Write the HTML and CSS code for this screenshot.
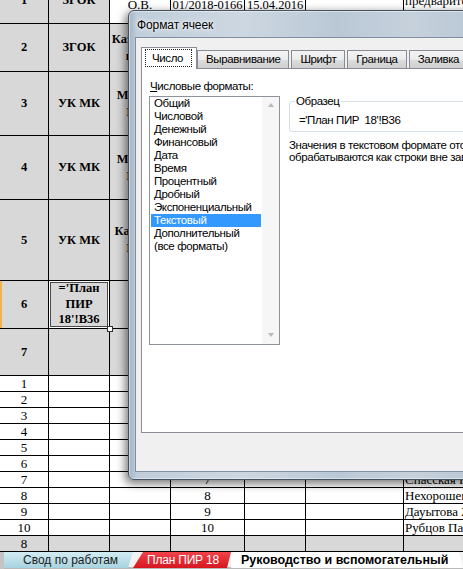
FILE: index.html
```html
<!DOCTYPE html>
<html lang="ru">
<head>
<meta charset="utf-8">
<title>Формат ячеек</title>
<link rel="stylesheet" href="styles.css">
</head>
<body>
<div class="sheet">
  <!-- row 1 -->
  <div class="c g b">1</div>
  <div class="c g b">ЗГОК</div>
  <div class="c w dn9">О.В.</div>
  <div class="c w dn10">01/2018-0166</div>
  <div class="c w dn10">15.04.2016</div>
  <div class="c w up9">01.06.2018</div>
  <div class="c w l">предварительный</div>
  <!-- row 2 -->
  <div class="c g b">2</div>
  <div class="c g b">ЗГОК</div>
  <div class="c g b two">Казахмыс<br>в т.ч.</div>
  <div class="c g"></div><div class="c g"></div><div class="c g"></div><div class="c g"></div>
  <!-- row 3 -->
  <div class="c g b">3</div>
  <div class="c g b">УК МК</div>
  <div class="c g b two">Монтаж<br>ПИР</div>
  <div class="c g"></div><div class="c g"></div><div class="c g"></div><div class="c g"></div>
  <!-- row 4 -->
  <div class="c g b">4</div>
  <div class="c g b">УК МК</div>
  <div class="c g b two">Монтаж<br>ПИР</div>
  <div class="c g"></div><div class="c g"></div><div class="c g"></div><div class="c g"></div>
  <!-- row 5 -->
  <div class="c g b">5</div>
  <div class="c g b">УК МК</div>
  <div class="c g b two">Каражан<br>ПИР</div>
  <div class="c g"></div><div class="c g"></div><div class="c g"></div><div class="c g"></div>
  <!-- row 6 -->
  <div class="c g b rowmark">6</div>
  <div class="c g b three selcell">='План<br>ПИР<br>18'!B36<span class="handle"></span></div>
  <div class="c g"></div><div class="c g"></div><div class="c g"></div><div class="c g"></div><div class="c g"></div>
  <!-- row 7 -->
  <div class="c g b">7</div>
  <div class="c g"></div><div class="c g"></div><div class="c g"></div><div class="c g"></div><div class="c g"></div><div class="c g"></div>
  <!-- rows 1..10 -->
  <div class="c">1</div><div class="c"></div><div class="c"></div><div class="c">1</div><div class="c"></div><div class="c"></div><div class="c l">Иванов А.С.</div>
  <div class="c">2</div><div class="c"></div><div class="c"></div><div class="c">2</div><div class="c"></div><div class="c"></div><div class="c l">Петров И.И.</div>
  <div class="c">3</div><div class="c"></div><div class="c"></div><div class="c">3</div><div class="c"></div><div class="c"></div><div class="c l">Сидоров К.Н.</div>
  <div class="c">4</div><div class="c"></div><div class="c"></div><div class="c">4</div><div class="c"></div><div class="c"></div><div class="c l">Ахметов Б.К.</div>
  <div class="c">5</div><div class="c"></div><div class="c"></div><div class="c">5</div><div class="c"></div><div class="c"></div><div class="c l">Ким О.В.</div>
  <div class="c">6</div><div class="c"></div><div class="c"></div><div class="c">6</div><div class="c"></div><div class="c"></div><div class="c l">Смирнова Е.А.</div>
  <div class="c">7</div><div class="c"></div><div class="c"></div><div class="c">7</div><div class="c"></div><div class="c"></div><div class="c l">Спасская Н.В.</div>
  <div class="c">8</div><div class="c"></div><div class="c"></div><div class="c">8</div><div class="c"></div><div class="c"></div><div class="c l">Нехорошев В.Н.</div>
  <div class="c">9</div><div class="c"></div><div class="c"></div><div class="c">9</div><div class="c"></div><div class="c"></div><div class="c l">Дауытова Ж.К.</div>
  <div class="c">10</div><div class="c"></div><div class="c"></div><div class="c">10</div><div class="c"></div><div class="c"></div><div class="c l">Рубцов Павел</div>
  <!-- row 8 gray -->
  <div class="c g">8</div>
  <div class="c g"></div><div class="c g"></div><div class="c g"></div><div class="c g"></div><div class="c g"></div><div class="c g"></div>
</div>

<div class="sheettabs">
  <div class="st-edge"></div>
  <div class="st st-blue">Свод по работам</div>
  <div class="st st-red">План ПИР 18</div>
  <div class="st st-active">Руководство и вспомогательный</div>
</div>

<div class="dialog">
  <div class="titlebar">Формат ячеек</div>
  <div class="client">
    <div class="tabstrip">
      <div class="tab sel"><span class="focus">Число</span></div>
      <div class="tab first">Выравнивание</div>
      <div class="tab">Шрифт</div>
      <div class="tab">Граница</div>
      <div class="tab">Заливка</div>
      <div class="tab">Защита</div>
    </div>
    <div class="panel">
      <div class="leftcol">
        <div class="label"><u>Ч</u>исловые форматы:</div>
        <div class="listbox">
          <ul class="items">
            <li>Общий</li>
            <li>Числовой</li>
            <li>Денежный</li>
            <li>Финансовый</li>
            <li>Дата</li>
            <li>Время</li>
            <li>Процентный</li>
            <li>Дробный</li>
            <li>Экспоненциальный</li>
            <li class="hl">Текстовый</li>
            <li>Дополнительный</li>
            <li>(все форматы)</li>
          </ul>
          <div class="vscroll"><span class="arr up"></span><span class="arr down"></span></div>
        </div>
      </div>
      <div class="rightcol">
        <fieldset class="sample">
          <legend>Образец</legend>
          <div class="sampletext">='План ПИР&nbsp; 18'!B36</div>
        </fieldset>
        <p class="desc">Значения в текстовом формате отображаются точно так же, как вводятся, и<br>обрабатываются как строки вне зависимости от их содержания.</p>
      </div>
    </div>
  </div>
</div>
</body>
</html>
```

FILE: styles.css
```css
html, body {
  margin: 0;
  padding: 0;
  width: 463px;
  height: 569px;
  overflow: hidden;
  background: #fff;
}
body {
  position: relative;
  font-family: "Liberation Serif", serif;
}

/* ---------- spreadsheet ---------- */
.sheet {
  display: grid;
  grid-template-columns: 49px 61px 61px 74px 61px 98px 140px;
  grid-template-rows: 47px 48px 64px 64px 81px 48px 47px repeat(11, 16px);
  width: 544px;
  margin-top: -23px;
}
.c {
  box-sizing: border-box;
  border-right: 1px solid #000;
  border-bottom: 1px solid #000;
  display: flex;
  align-items: center;
  justify-content: center;
  text-align: center;
  overflow: hidden;
  white-space: nowrap;
  font-size: 13px;
  line-height: 15px;
  color: #000;
}
.g { background: #d8d8d8; }
.w { background: #fff; }
.b { font-weight: bold; font-size: 12.5px; }
.l { justify-content: flex-start; padding-left: 1px; }
.two { line-height: 17px; }
.three { line-height: 15.5px; }
.dn9 { padding-top: 9px; }
.dn10 { padding-top: 10px; font-size: 12.5px; }
.up9 { padding-bottom: 9px; }
.rowmark { box-shadow: inset 2px 0 0 #efb54a; }
.selcell {
  position: relative;
  overflow: visible;
  z-index: 2;
  box-shadow: inset 0 0 0 1px #fff, inset 0 0 0 2px #4a4a4a;
}
.handle {
  position: absolute;
  right: -4px;
  bottom: -4px;
  width: 4px;
  height: 4px;
  background: #fff;
  border: 1px solid #333;
}

/* ---------- sheet tabs ---------- */
.sheettabs {
  display: flex;
  height: 17px;
  background: #f2f2f2;
  box-shadow: inset 0 -2px 0 #b9b9b9;
  font-family: "Liberation Sans", sans-serif;
  font-size: 12px;
  line-height: 17px;
  white-space: nowrap;
  overflow: hidden;
}
.st-edge { width: 4px; background: #c4c4c4; }
.st { box-sizing: border-box; height: 16px; }
.st-blue {
  width: 129px;
  padding-left: 19px;
  color: #1c1c1c;
  background: linear-gradient(#d3ecf2, #a7d3df);
  clip-path: polygon(0 0, 100% 0, calc(100% - 5px) 100%, 0 100%);
}
.st-red {
  width: 98px;
  padding-left: 14px;
  color: #fff;
  letter-spacing: -0.2px;
  background: linear-gradient(#f2434b, #d6161f);
  clip-path: polygon(10px 0, 100% 0, calc(100% - 4px) 100%, 0 100%);
}
.st-active {
  width: 232px;
  padding-left: 10px;
  color: #000;
  font-weight: bold;
  font-size: 12.5px;
  background: #fff;
  clip-path: polygon(0 0, calc(100% - 4px) 0, 100% 100%, 0 100%);
}

/* ---------- dialog ---------- */
.dialog {
  position: absolute;
  left: 128px;
  top: 10px;
  width: 380px;
  height: 470px;
  box-sizing: border-box;
  display: flex;
  flex-direction: column;
  border: 1px solid #44525f;
  border-radius: 6px;
  background:
    linear-gradient(90deg, rgba(140,160,182,.55) 0, rgba(255,255,255,0) 8px),
    linear-gradient(90deg, #bfcdda 0%, #cdd7e1 30%, #bac8d6 55%, #c6d1dc 75%, #b3c2d1 100%);
  box-shadow: -2px 3px 9px 1px rgba(0,0,0,.5), inset 0 0 0 1px rgba(255,255,255,.45);
  font-family: "Liberation Sans", sans-serif;
  font-size: 11.5px;
  letter-spacing: -0.4px;
  color: #000;
}
.titlebar {
  height: 26px;
  box-sizing: border-box;
  padding: 7px 0 0 8px;
  line-height: 14px;
  font-size: 12px;
  letter-spacing: -0.1px;
  text-shadow: 0 0 6px #fff, 0 0 3px #fff;
}
.client {
  flex: 1;
  margin: 0 6px 7px 6px;
  background: #f0f0f0;
  border: 1px solid #7f90a3;
  display: flex;
  flex-direction: column;
}
.tabstrip {
  height: 30px;
  box-sizing: border-box;
  display: flex;
  align-items: flex-end;
  padding-left: 5px;
  white-space: nowrap;
}
.tab {
  box-sizing: border-box;
  height: 18px;
  line-height: 17px;
  padding: 0 8px;
  margin-left: 2px;
  border: 1px solid #898c95;
  border-bottom: none;
  background: linear-gradient(#f3f3f3 0%, #ebebeb 50%, #dddddd 51%, #cfcfcf 100%);
}
.tab.first { margin-left: 0; }
.tab.sel {
  position: relative;
  z-index: 1;
  height: 22px;
  margin: 0 0 -1px 0;
  padding: 1px 4px 0 3px;
  background: #fff;
}
.focus {
  display: block;
  border: 1px dotted #222;
  height: 15px;
  line-height: 15px;
  padding: 1px 8px 0 6px;
}
.panel {
  height: 365px;
  box-sizing: border-box;
  margin-left: 5px;
  border: 1px solid #898c95;
  background: #fff;
  display: flex;
  align-items: flex-start;
  padding: 10px 0 0 8px;
  white-space: nowrap;
}
.leftcol { flex: none; }
.label { line-height: 14px; margin-bottom: 3px; }
.listbox {
  width: 131px;
  height: 249px;
  box-sizing: border-box;
  margin-left: -1px;
  border: 1px solid #8e929b;
  display: flex;
}
.items {
  list-style: none;
  margin: 0;
  padding: 0 1px;
  width: 112px;
  box-sizing: border-box;
}
.items li { line-height: 13px; height: 13px; padding-left: 3px; }
.items li.hl { background: #3399ff; color: #fff; }
.vscroll {
  width: 17px;
  background: #f6f6f6;
  display: flex;
  flex-direction: column;
  justify-content: space-between;
  align-items: center;
  padding: 6px 0 7px;
  box-sizing: border-box;
}
.arr { width: 0; height: 0; border-left: 3.5px solid transparent; border-right: 3.5px solid transparent; }
.arr.up { border-bottom: 4px solid #b9b9b9; }
.arr.down { border-top: 4px solid #b9b9b9; }
.rightcol { margin: 16px 0 0 9px; width: 320px; }
.sample {
  margin: 0;
  padding: 6px 9px 4px 9px;
  border: 1px solid #d5dfe5;
  border-radius: 3px;
  min-width: 0;
}
.sample legend {
  padding: 0 1px;
  margin-left: -4px;
  line-height: 13px;
}
.sampletext { line-height: 13px; }
.desc { margin: 7px 0 0 0; line-height: 12px; }
```
